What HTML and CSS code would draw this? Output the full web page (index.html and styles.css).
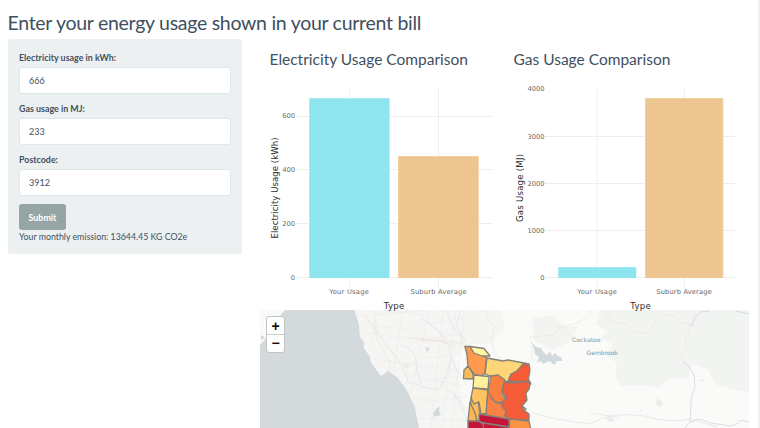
FILE: index.html
```html
<!DOCTYPE html>
<html lang="en">
<head>
<meta charset="utf-8">
<title>Energy usage</title>
<link rel="stylesheet" href="styles.css">
</head>
<body>
<div class="page">
  <h1>Enter your energy usage shown in your current bill</h1>
  <div class="layout">
    <form class="well">
      <label for="kwh">Electricity usage in kWh:</label>
      <input id="kwh" type="text" value="666">
      <label for="mj">Gas usage in MJ:</label>
      <input id="mj" type="text" value="233">
      <label for="postcode">Postcode:</label>
      <input id="postcode" type="text" value="3912">
      <button type="button">Submit</button>
      <p>Your monthly emission: 13644.45 KG CO2e</p>
    </form>
    <main>
      <div class="charts">
        <section>
          <h2>Electricity Usage Comparison</h2>
          <svg class="chart" viewBox="260 80 244 230">
            <path class="grid" d="M296 116.5H492M296 169.5H492M296 223.5H492M296 277.5H492M349.500 89.500V287M438.500 89.500V287"/>
            <rect class="edge-own" x="309" y="98" width="81" height="180"/><rect class="own" x="309.500" y="98.500" width="79.500" height="179.500"/>
            <rect class="edge-avg" x="398" y="156" width="81" height="122"/><rect class="avg" x="398.500" y="156.500" width="79.500" height="121.500"/>
            <g class="tick end"><text x="295" y="118.400">600</text><text x="295" y="172.200">400</text><text x="295" y="226.100">200</text><text x="295" y="280.200">0</text></g>
            <g class="tick mid"><text x="349" y="294.400" textLength="39.500">Your Usage</text><text x="438.500" y="294.400" textLength="56">Suburb Average</text></g>
            <text class="axis" x="394" y="308.500" textLength="20.500">Type</text>
            <text class="axis" transform="translate(278.200 188) rotate(-90)" textLength="101">Electricity Usage (kWh)</text>
          </svg>
        </section>
        <section>
          <h2>Gas Usage Comparison</h2>
          <svg class="chart" viewBox="504 80 245 230">
            <path class="grid" d="M545 136.500H735.500M545 183.500H735.500M545 230.500H735.500M545 277.500H735.500M597 89.500V287M684.500 89.500V287"/>
            <rect class="edge-own" x="558" y="267" width="78.500" height="11"/><rect class="own" x="558.500" y="267.300" width="77.500" height="10.700"/>
            <rect class="edge-avg" x="645" y="98" width="78.500" height="180"/><rect class="avg" x="645.500" y="98.500" width="77" height="179.500"/>
            <g class="tick end"><text x="544.500" y="91.400">4000</text><text x="544.500" y="138.700">3000</text><text x="544.500" y="186.100">2000</text><text x="544.500" y="233">1000</text><text x="544.500" y="280.200">0</text></g>
            <g class="tick mid"><text x="597" y="294.400" textLength="39.500">Your Usage</text><text x="684" y="294.400" textLength="55.500">Suburb Average</text></g>
            <text class="axis" x="640.500" y="308.500" textLength="20.500">Type</text>
            <text class="axis" transform="translate(522.500 188) rotate(-90)" textLength="68">Gas Usage (MJ)</text>
          </svg>
        </section>
      </div>
      <div class="map">
        <svg viewBox="260 310 489 118">
          <path class="land" d="M260 310H749V428H260Z"/>
          <path class="urban" d="M354 310H500L505 326L493 343L467 345L455 358L461 390L469 428H419L415 408L408 392L398 378L388 371L381 376L370 358L360 337Z"/>
          <path class="forest" d="M600 310H749V392L734 390L717 385L708 370L700 366L693 364L690 370L688 379L672 378L658 388L640 385L620 386L615 377L617 363L606 355L613 344L600 339L608 331L596 325ZM532 318L552 316L564 326L578 327L572 340L553 350L534 341Z"/>
          <path class="water" d="M285 310H354.300L359 325L360 337L364 342V348L370 357L371 362L375 368L381 375.700L384 374L388 370.700L398 378L408 392L415 408L419 428H260V345L266 338L267 330L280 316Z"/>
          <path class="minor" d="M362 316L424 310M365 333L463 345M373 359L461 371M390 369L464 387M411 396L468 408M417 418L470 421M376 310L370 350M403 310L393 374M430 310L410 395M443 310L431 428M456 310L442 428M464 312L452 428M423 324L463 319M425 339L462 334M421 358L459 356M424 381L462 376M424 402L467 396M384 310L430 316M363 325L414 330M418 365L463 403M425 319L460 350"/>
          <path class="road" d="M365 316Q376 330 389 348Q405 367 408 382Q424 388 440 390M402 345Q415 351 416 358Q415 372 422 384M420 318Q438 326 448 345Q454 370 467 385M447 310Q449 327 461 336Q467 347 468 382M452 358Q447 375 440 388M461 310L456 326L466 342M532 413Q556 420 590 424Q612 411 644 416Q671 424 692 419L717 427M590 413L618 417M450 389Q461 400 469 425"/>
          <path class="boundary" d="M376 320V336L390 363V374M406 337L463 343M420 340L442 341L455 348M485 310L489 322L495 327L491 340L495 354L508 364M532 359V343L530 337L554 335L559 328L574 324L590 316L592 310M605 311L611 321L625 324L635 333L646 333L655 325L655 320L663 315L675 316L682 323L692 325M696 314L690 329L685 341L687 348L681 355L683 362"/>
          <path class="river" d="M710 311L700 312L695 318L692 326M683 362L689 366L694 375L695 387L691 400L690 422L700 419L711 423L730 426L737 424L741 420L749 422M735 311L749 314M690 422L685 428"/>
          <path class="lake" d="M531 342L536 347L541 348L544 353L547 355L550 351L552 356L555 353L558 356L562 358V361L557 361L554 365L550 361L547 362L543 364L541 361L537 363L539 357L535 354L534 348ZM433 413L436 409L440 406L439 411L441 415L434 417ZM260 335L265 337L262 340ZM425 347L430 348L427 352ZM701 380H703V381H701ZM640 410H641V411H640Z"/>
          <path class="urban-spot" d="M405 362L410 365L408 369L403 367ZM607 417L614 418V422L607 421ZM657 398L663 402L661 407L656 405Z"/>
          <g class="suburbs">
            <path fill="#fdbc59" d="M468 366L473 374L473 379L463.500 378.500L464 370Z"/>
            <path fill="#ff994e" d="M465 346.500H470L474 353L482 354L486.500 358L485 373L481 376L474 374L468 366L467 354Z"/>
            <path fill="#fff7a3" d="M470 346.500L484 348.500L490 356L482 356L474 353Z"/>
            <path fill="#fdd777" d="M487 358L503 361L508 360L529 364L524 364L517 371L511 375L508 382L502 381L498 376L490 376L485 374Z"/>
            <path fill="#f45b36" d="M523 364L529 364.500L530 370L528.500 379L531 384L525 381L516 382L508 381L511 374L517 371Z"/>
            <path fill="#fff19b" d="M474 375L489 376.500L488 389L473 388Z"/>
            <path fill="#ffc35f" d="M473 388L488 390L486 414L481 414L479 402L474 407L471 398Z"/>
            <path fill="#fdbc59" d="M471 398L474 404L478 402L480 414H486L480 417V421H469Z"/>
            <path fill="#fa8044" d="M488 389L491 397L495 402L502 404L506 411L505 416L510 419V421L486 415Z"/>
            <path fill="#fa803f" d="M491 376L498 375L505 380L502 389L503 396L506 398L502 403L495 402L491 397L488 392Z"/>
            <path fill="#f45b36" d="M504 382L516 383L525 381L530 384L529 389L526 393L527 400L522 406L525 411L529 414L529 420L510 420L505 415L506 411L502 407L502 402L507 398L502 392Z"/>
            <path fill="#fdb456" d="M470 402L475 413L477 421H468Z"/>
            <path fill="#c51539" d="M479 414L509 419V427L483 423L479 421Z"/>
            <path fill="#c51539" d="M468 421H478L483 424L496 426V431H468Z"/>
            <path fill="#fa9344" d="M510 419L529 421L531 430H509Z"/>
            <path fill="#c51539" d="M483 423L509 427V431H484Z"/>
            <path fill="#cfc79c" d="M522 406L526 409L524 411Z"/>
          </g>
          <g class="place"><text x="572" y="342.300" textLength="28.500">Cockatoo</text><text x="586.500" y="354.800" textLength="31.500">Gembrook</text></g>
        </svg>
        <div class="zoom"><b>+</b><b>−</b></div>
      </div>
    </main>
  </div>
</div>
</body>
</html>
```
FILE: styles.css
```css
* { box-sizing: border-box; }
body {
  margin: 0;
  height: 428px;
  overflow: hidden;
  background: #fff;
  color: #3f505f;
  font: 8.800px/13px Lato, sans-serif;
}
.page {
  height: 428px;
  padding: 11px 0 0 7.500px;
  border-right: 2px solid #f1f1f1;
}
h1 {
  margin: 0;
  height: 27.500px;
  font-size: 19.500px;
  font-weight: 400;
  letter-spacing: -0.280px;
  line-height: 24px;
  white-space: nowrap;
}
.layout { display: grid; grid-template-columns: 234.500px 489px; column-gap: 18px; align-items: start; }
.well {
  height: 215.500px;
  padding: 12.500px 11px 12px 11.500px;
  background: #ecf0f1;
  border-radius: 3px;
}
label { display: block; height: 15.500px; font-size: 8.900px; font-weight: 700; }
input {
  display: block;
  width: 211.500px;
  height: 27px;
  margin: 0 0 8.500px;
  padding: 0 9px;
  border: 1px solid #dfe7ee;
  border-radius: 3px;
  background: #fff;
  color: #3f505f;
  font: 9px Lato, sans-serif;
}
button {
  display: block;
  width: 47px;
  height: 26px;
  margin-top: 8.500px;
  padding: 0;
  border: 0;
  border-radius: 3px;
  background: #95a5a6;
  color: #fff;
  font: 700 8.900px Lato, sans-serif;
}
p { margin: 0; white-space: nowrap; }
.charts { display: grid; grid-template-columns: 244px 245px; position: relative; z-index: 1; }
h2 {
  height: 41.500px;
  margin: 0;
  padding: 10.500px 0 0 9.500px;
  font-size: 15.500px;
  font-weight: 400;
  line-height: 21px;
  white-space: nowrap;
}
svg { display: block; width: 100%; }
.chart { height: 230px; overflow: visible; }
.grid { fill: none; stroke: #eeeeee; }
.own { fill: #8ee5ee; }
.avg { fill: #edc591; }
.edge-own { fill: #c3f2f5; }
.edge-avg { fill: #f3d8b5; }
.tick { fill: #666; font: 6.700px "DejaVu Sans", sans-serif; }
.end { text-anchor: end; }
.mid { text-anchor: middle; }
.axis { fill: #2d2d2d; font: 8.600px "DejaVu Sans", sans-serif; text-anchor: middle; }
.map { position: relative; height: 118px; overflow: hidden; }
.map svg { height: 118px; }
.land { fill: #fafaf8; }
.urban { fill: #f5f5f3; }
.forest { fill: #f2f4f2; }
.water { fill: #d4dadc; }
.lake { fill: #d3dadd; }
.urban-spot { fill: #ededeb; }
.minor, .road, .boundary, .river { fill: none; }
.minor { stroke: #e9e9e9; stroke-width: .500; }
.road { stroke: #e1e1e1; stroke-width: .700; }
.boundary { stroke: #edcfd1; stroke-width: .600; stroke-dasharray: 1.500 1; }
.river { stroke: #cfd8dc; stroke-width: .800; }
.suburbs { stroke: #858178; stroke-width: 1.300; stroke-linejoin: round; }
.place { fill: #8193a5; font: 6px "DejaVu Sans", sans-serif; }
.zoom {
  position: absolute;
  left: 6px;
  top: 6px;
  width: 19px;
  height: 37px;
  border: 1px solid #bfc4c5;
  border-radius: 3px;
  background: #fff;
  color: #111;
  overflow: hidden;
}
.zoom b {
  display: block;
  height: 17px;
  font: 700 14px/18px "Liberation Sans", sans-serif;
  text-align: center;
}
.zoom b + b { height: 18px; border-top: 1px solid #ccc; line-height: 17px; }
```
